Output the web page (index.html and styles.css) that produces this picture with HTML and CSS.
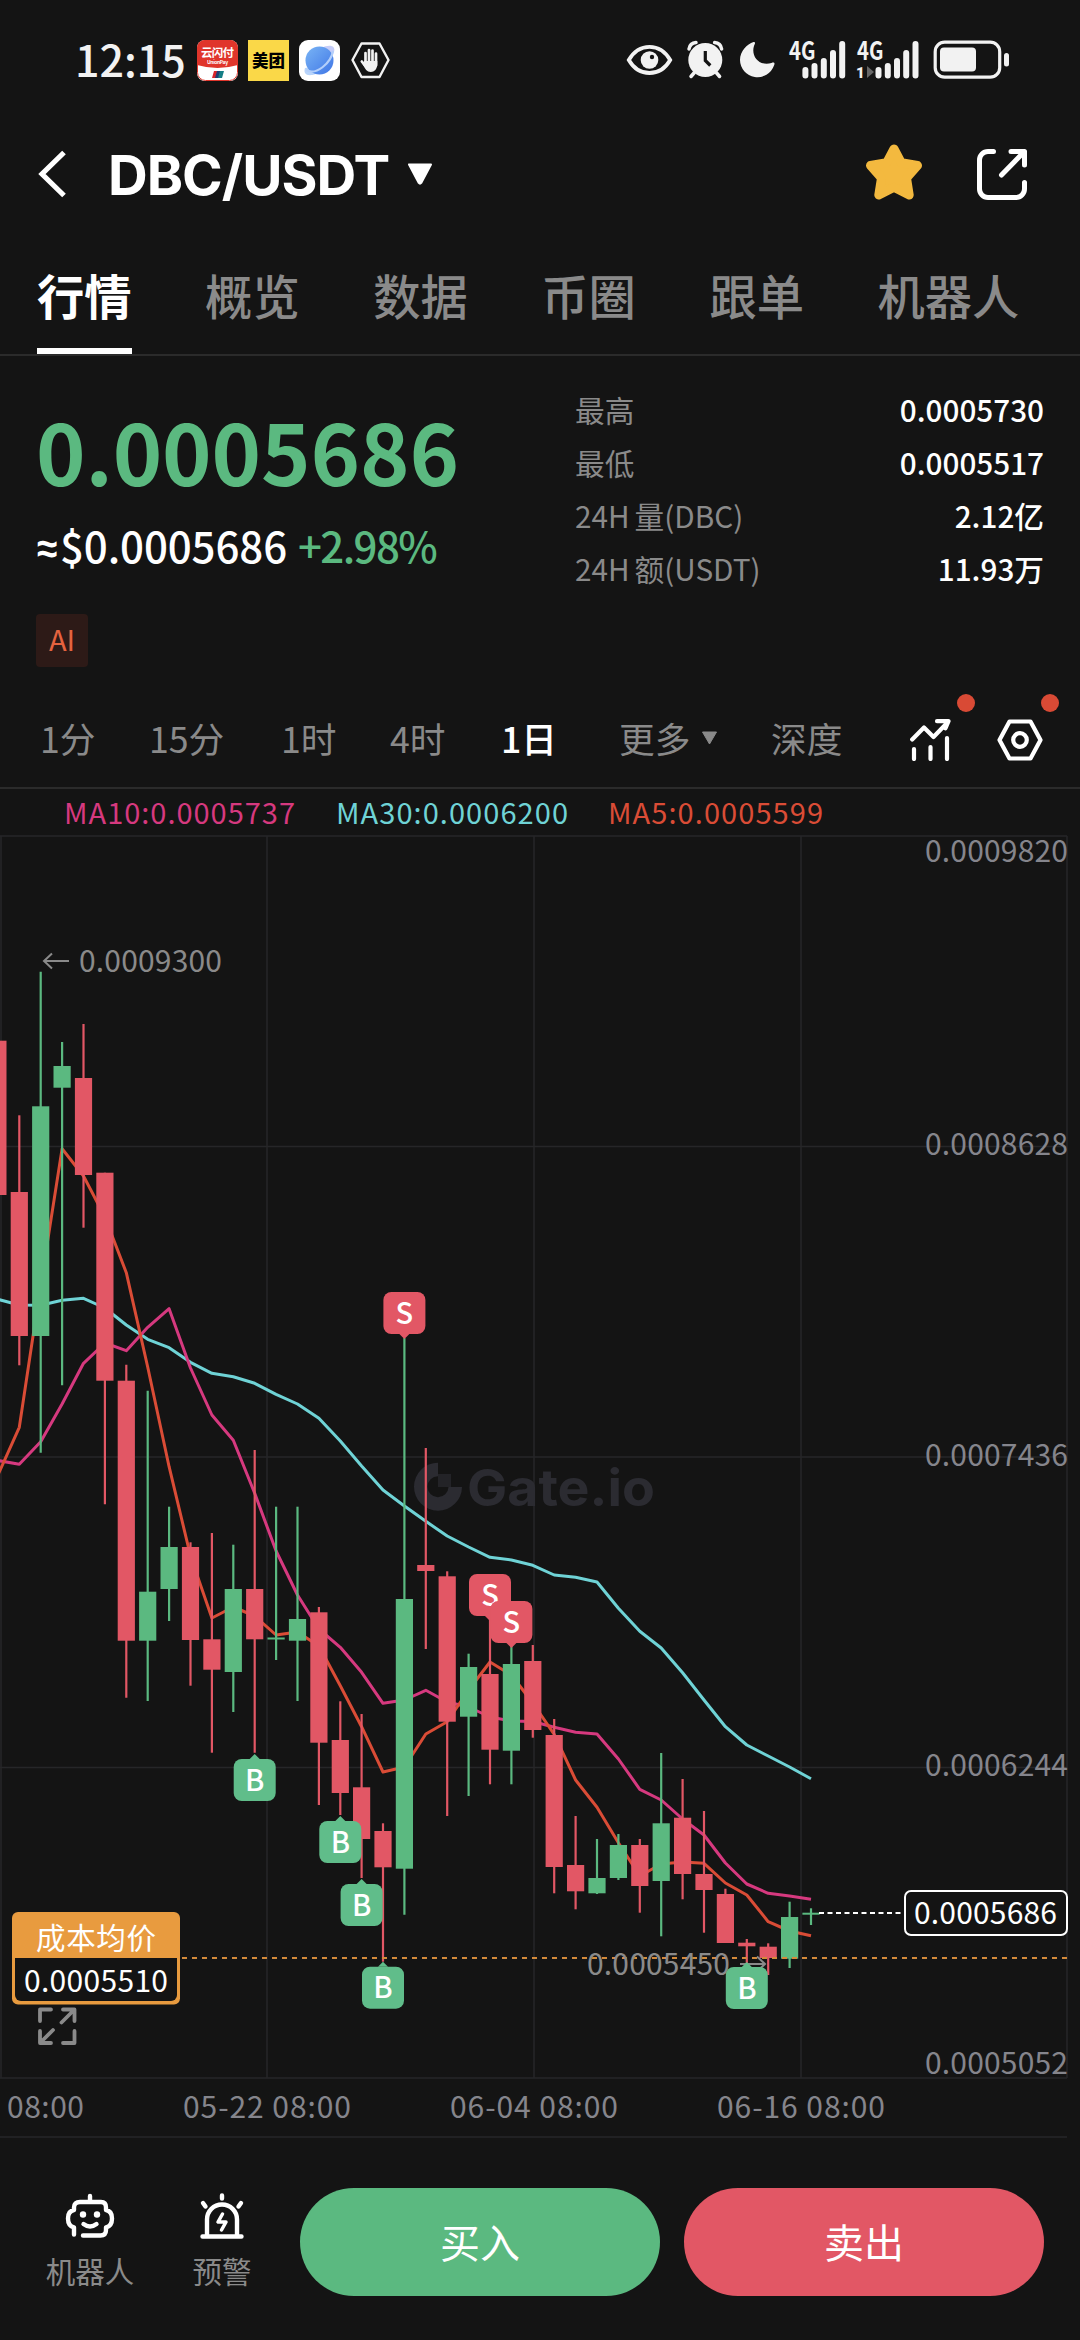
FILE: index.html
```html
<!DOCTYPE html>
<html lang="zh-CN">
<head>
<meta charset="utf-8">
<title>DBC/USDT</title>
<link rel="stylesheet" href="styles.css">
</head>
<body>
<div class="screen">
  <div class="status">
    <span class="clock">12:15</span>
    <svg class="app" width="41" height="41" viewBox="0 0 41 41">
      <defs><clipPath id="up"><rect width="41" height="41" rx="8"/></clipPath></defs>
      <g clip-path="url(#up)"><rect width="41" height="41" fill="#fff"/><path d="M0 0H41V25Q20.500 31 0 25Z" fill="#e0352b"/>
      <path d="M17 31h4l-2 7h-4z" fill="#d8262c"/><path d="M20 31h4l-2 7h-4z" fill="#1f3f73"/><path d="M23 31h4l-2 7h-4z" fill="#157f86"/>
      <rect x=".5" y=".5" width="40" height="40" rx="8" fill="none" stroke="#e0352b"/></g>
      <text x="20.500" y="17" class="up-name" textLength="33">云闪付</text><text x="20.500" y="24" class="up-sub" textLength="21">UnionPay</text>
    </svg>
    <svg class="app" width="41" height="41" viewBox="0 0 41 41"><rect width="41" height="41" fill="#fad848"/><text x="20.500" y="26.500" class="mt-name" textLength="33">美团</text></svg>
    <svg class="app" width="41" height="41" viewBox="0 0 41 41">
      <defs><linearGradient id="pl" x1="0" y1="0" x2="1" y2="1"><stop offset="0" stop-color="#79b4f5"/><stop offset="1" stop-color="#3f76e6"/></linearGradient></defs>
      <rect width="41" height="41" rx="9" fill="#fff"/><path d="M22 8C30 4 37 5 35 12L30 22Z" fill="#c6cdf8"/><path d="M6 28C4 34 8 37 17 34L12 27Z" fill="#b9d5fb"/>
      <circle cx="20.500" cy="20.500" r="14" fill="url(#pl)"/><path d="M7 30C17 36 32 23 34 11" fill="none" stroke="#b3cffa" stroke-width="2.200"/>
    </svg>
    <svg class="app" width="41" height="41" viewBox="0 0 41 41"><path d="M11.500 3.500h18l9 16.500-9 17h-18l-9-17z" fill="none" stroke="#f2f2f2" stroke-width="2.400" stroke-linejoin="round"/>
      <g stroke="#f2f2f2" stroke-width="2.700" stroke-linecap="round"><path d="M15.500 13v12M19 10v14M22.500 10.500v13M26 13.500v12M11.800 21.500l4 5"/></g><path d="M14.200 21h13.100v3c0 5-3 8-6.500 8-4 0-5.500-3-8.300-8z" fill="#f2f2f2"/></svg>
    <svg class="sys" width="390" height="60" viewBox="624 30 390 60">
      <path d="M628.800 60C634 51 641 46.800 649.500 46.800S665 51 670.200 60C665 69 658 73 649.500 73S634 69 628.800 60Z" fill="none" stroke="#f2f2f2" stroke-width="3.800"/><circle cx="649.500" cy="60" r="8.800" fill="#f2f2f2"/><circle cx="652" cy="57" r="2.200" fill="#141414"/>
      <g fill="#f2f2f2"><circle cx="705.300" cy="60" r="17"/></g>
      <g fill="none" stroke="#f2f2f2" stroke-width="3.500" stroke-linecap="round"><path d="M689 49Q690 43 696 42.600M721.600 49Q720.600 43 714.600 42.600M694 73l-3 3.500M716.600 73l3 3.500"/></g>
      <path d="M705.300 51v9.500l5 5" fill="none" stroke="#141414" stroke-width="3.200"/>
      <path d="M753.500 42C747 44 740 51 740 60a17.500 17.500 0 0 0 34 5.500c1.500-3-.5-3.500-2.500-2.500C759 67 749.500 55 754.800 44c.6-1.600 0-2.300-1.300-2z" fill="#f2f2f2"/>
      <text x="789" y="60" class="net" textLength="26.500" lengthAdjust="spacingAndGlyphs">4G</text><text x="857" y="60" class="net" textLength="26.500" lengthAdjust="spacingAndGlyphs">4G</text>
      <g stroke="#f2f2f2" stroke-width="6" stroke-linecap="round"><path d="M805.400 70v5.500M814.500 66v9.500M823.800 61v14.500M833 53v22.500M842.200 44v31.500M878.500 70v5.500M887.800 66v9.500M897 61v14.500M906.200 53v22.500M915.500 44v31.500"/></g>
      <text x="856" y="78" class="sim">1</text><path d="M867 66l7 6-7 6z" fill="#666"/>
      <rect x="935.200" y="42.200" width="64.500" height="35" rx="9.500" fill="none" stroke="#f2f2f2" stroke-width="3.200"/><rect x="940" y="47.500" width="36" height="24" rx="4" fill="#f2f2f2"/><rect x="1004" y="53" width="5" height="13.500" rx="2.500" fill="#f2f2f2"/>
    </svg>
  </div>

  <header class="head">
    <svg class="back" width="30" height="50" viewBox="0 0 30 50"><path d="M26 3.500L4 25l22 21.500" fill="none" stroke="#fff" stroke-width="5.200"/></svg>
    <h1 class="pair">DBC/USDT</h1>
    <svg class="caret" width="26" height="22" viewBox="0 0 26 22"><path d="M2 1.500h22l-9.800 18.500q-1.200 1.500-2.400 0z" fill="#fff" stroke="#fff" stroke-width="2" stroke-linejoin="round"/></svg>
    <svg class="star" width="58" height="56" viewBox="0 0 58 56"><path d="M29 5l7.400 13.800L52.500 21.500 41.500 34l2.700 17L29 43.200 13.800 51l2.700-17L5.500 21.500l16.100-2.700z" fill="#f3b93f" stroke="#f3b93f" stroke-width="9" stroke-linejoin="round"/></svg>
    <svg class="share" width="50" height="51" viewBox="0 0 50 51"><g fill="none" stroke="#fff" stroke-width="5" stroke-linecap="round" stroke-linejoin="round"><path d="M16.500 2.500H11a8.500 8.500 0 0 0-8.500 8.500V40a8.500 8.500 0 0 0 8.500 8.500H39a8.500 8.500 0 0 0 8.500-8.500v-6.500M34 2.500h13.500V16M46.500 3.500L24.500 26"/></g></svg>
  </header>

  <nav class="tabs">
    <span class="tab on">行情</span><span class="tab">概览</span><span class="tab">数据</span><span class="tab">币圈</span><span class="tab">跟单</span><span class="tab">机器人</span>
  </nav>

  <section class="info">
    <div class="quote">
      <div class="price">0.0005686</div>
      <div class="sub"><span class="usd"><span class="approx">≈</span>$0.0005686</span><span class="chg">+2.98%</span></div>
      <span class="tag">AI</span>
    </div>
    <div class="stats">
      <div class="stat"><span>最高</span><b>0.0005730</b></div>
      <div class="stat"><span>最低</span><b>0.0005517</b></div>
      <div class="stat"><span>24H<i></i>量(DBC)</span><b>2.12亿</b></div>
      <div class="stat"><span>24H<i></i>额(USDT)</span><b>11.93万</b></div>
    </div>
  </section>

  <div class="periods">
    <span class="p1">1分</span><span class="p2">15分</span><span class="p3">1时</span><span class="p4">4时</span><span class="p5">1日</span>
    <span class="p6">更多<svg width="17" height="14" viewBox="0 0 16 14"><path d="M1 1h14L8 13z" fill="#8a8a8a" stroke="#8a8a8a" stroke-linejoin="round"/></svg></span><span class="p7">深度</span>
    <span class="tool t1"><svg width="41" height="42" viewBox="0 0 41 42"><g fill="none" stroke="#fff" stroke-width="4.200" stroke-linecap="round" stroke-linejoin="round"><path d="M2.200 20.500L14 8.500 23.500 18 38 3M27 2.200h11.500M38.500 2.200l-3 7M4 30v10M20.500 28v12M37 19v21"/></g></svg><em></em></span>
    <span class="tool t2"><svg width="46" height="42" viewBox="0 0 46 42"><path d="M12.500 2.500h21L43.500 21l-10 18.500h-21L2.500 21z" fill="none" stroke="#fff" stroke-width="4.200" stroke-linejoin="round"/><circle cx="23" cy="21" r="6.800" fill="none" stroke="#fff" stroke-width="4.200"/></svg><em></em></span>
  </div>

  <svg class="chart" id="chart" width="1080" height="1349" viewBox="0 789 1080 1349"></svg>

  <footer class="bar">
    <div class="act a1">
      <svg width="50" height="48" viewBox="0 0 50 48"><g fill="none" stroke="#fff" stroke-width="4.400" stroke-linecap="round" stroke-linejoin="round"><path d="M25 4v6M9 42.500V35.500Q3 34 3 26.500T9 18V15.500Q9 10 15 10H36Q41 10 41 15.500V18Q47 19 47 26.500T41 35.500V38Q41 43.500 35.500 43.500H18M18.500 32Q25 37 31.500 32"/></g><circle cx="18" cy="22.500" r="3.200" fill="#fff"/><circle cx="32" cy="22.500" r="3.200" fill="#fff"/></svg>
      <span>机器人</span>
    </div>
    <div class="act a2">
      <svg width="46" height="48" viewBox="0 0 46 48"><g fill="none" stroke="#fff" stroke-width="4.400" stroke-linecap="round" stroke-linejoin="round"><path d="M3.500 44.500h39M8 44V27.500a15 15 0 0 1 30 0V44M23 3.500v3M4 11l2.500 3.500M42 11l-2.500 3.500"/><path d="M23.500 22l-4.500 8h8l-4.500 8" stroke-width="3.500"/></g></svg>
      <span>预警</span>
    </div>
    <button class="btn buy">买入</button><button class="btn sell">卖出</button>
  </footer>
</div>
<script src="chart.js"></script>
</body>
</html>
```
FILE: styles.css
```css
* { box-sizing: border-box; }
body { margin: 0; background: #141414; }
.screen {
  width: 1080px; height: 2340px; overflow: hidden;
  display: flex; flex-direction: column;
  background: #141414; color: #fff;
  font-family: "Noto Sans CJK SC", "Noto Sans", sans-serif;
}
svg { display: block; flex: none; }
.status { height: 120px; display: flex; align-items: center; padding-left: 75px; }
.clock { width: 122px; font-size: 43px; font-weight: 500; line-height: 50px; letter-spacing: 0; color: #f2f2f2; padding-bottom: 4px; white-space: nowrap; }
.app { margin-right: 10px; }
.sys { margin-left: 223px; }
.up-name { font-size: 11.500px; font-weight: 700; fill: #fff; text-anchor: middle; }
.up-sub { font-size: 5px; font-weight: 700; fill: #fff; text-anchor: middle; }
.mt-name { font-size: 16.500px; font-weight: 900; fill: #000; text-anchor: middle; }
.net { font-size: 25px; font-weight: 700; fill: #f2f2f2; }
.sim { font-family: Roboto, sans-serif; font-size: 15px; font-weight: 900; fill: #f2f2f2; }

.head { height: 108px; display: flex; align-items: center; padding: 0 53px 0 38px; }
.pair { margin: 0 0 0 40px; width: 299px; font-family: Inter, "Noto Sans", sans-serif; font-size: 55px; font-weight: 700; line-height: 60px; letter-spacing: -1px; white-space: nowrap; padding-top: 2px; }
.star { margin-left: 432px; margin-top: -4px; }
.share { margin-left: auto; }

.tabs { height: 128px; display: flex; gap: 73.500px; padding-left: 37px; border-bottom: 2px solid #2b2b2b; }
.tab { position: relative; font-size: 47.300px; line-height: 134px; font-weight: 500; color: #8a8a8a; white-space: nowrap; }
.tab.on { color: #fff; font-weight: 700; }
.tab.on::after { content: ""; position: absolute; left: 0; right: 0; top: 120px; height: 6px; background: #fff; }

.info { height: 334px; display: flex; justify-content: space-between; padding: 28px 36px 0 36px; }
.price { margin-top: 10px; height: 112px; font-size: 84px; line-height: 112px; font-weight: 700; letter-spacing: -.1px; color: #5bb980; }
.sub { display: flex; gap: 11px; margin-top: 9px; height: 60px; font-size: 42px; line-height: 60px; font-weight: 500; white-space: nowrap; }
.usd { letter-spacing: -.1px; }
.approx { display: inline-block; width: 24px; font-family: "Noto Sans", sans-serif; font-weight: 600; letter-spacing: 0; transform: translateX(1px) scaleX(.88); transform-origin: left; }
.chg { color: #5bb980; letter-spacing: -1.600px; }
.tag { display: block; margin-top: 39px; width: 52px; height: 53px; border-radius: 4px; background: #2d1a17; color: #e5633f; font-size: 29px; line-height: 48px; text-align: center; }
.stats { width: 469px; padding-top: 1px; }
.stat { display: flex; justify-content: space-between; height: 53px; line-height: 50px; font-size: 29.700px; white-space: nowrap; }
.stat span { color: #8a8a8a; }
.stat i { display: inline-block; width: 5px; }
.stat b { font-weight: 500; }

.periods { height: 99px; display: flex; align-items: center; border-bottom: 2px solid #2b2b2b; padding-left: 40px; font-size: 35.700px; line-height: 90px; color: #8a8a8a; white-space: nowrap; }
.periods > span { flex: none; margin-top: -2px; }
.p1 { width: 109px; } .p2 { width: 132px; } .p3 { width: 109px; } .p4 { width: 111px; }
.p5 { width: 118px; color: #fff; font-weight: 500; }
.p6 { width: 152px; display: flex; align-items: center; gap: 11px; }
.p7 { width: 139px; }
.periods > .tool { position: relative; margin-top: 2px; }
.t1 { width: 87px; }
.tool em { position: absolute; left: 47px; top: -25px; width: 18px; height: 18px; border-radius: 50%; background: #d94a35; }
.tool.t2 em { left: 44px; }

.chart { font-family: "Noto Sans CJK SC", "Noto Sans", sans-serif; }
.grid { stroke: #262628; stroke-width: 1.500; fill: none; }
.axis { fill: #85858c; font-size: 30px; }
.ma { font-size: 29px; }
.hint { fill: #8a8a8a; font-size: 30px; }
.mark { fill: #fff; font-size: 29px; font-weight: 500; text-anchor: middle; }
.now { fill: #fff; font-size: 30px; }
.cost { fill: #fff; font-size: 29.500px; }
.logo { fill: #2b2b31; font-family: Inter, sans-serif; font-size: 51px; font-weight: 700; }

.bar { flex: 1; display: flex; padding: 50px 36px 0 46px; }
.act { display: flex; flex-direction: column; align-items: center; font-size: 29.500px; line-height: 40px; color: #8a8a8a; white-space: nowrap; }
.act svg { margin: 4px 0 10px; }
.a1 { width: 88px; margin-right: 59px; }
.a2 { width: 58px; margin-right: 49px; }
.btn { flex: 1; height: 108px; border: 0; border-radius: 54px; padding: 0 0 3px; color: #fff; font: 400 40px "Noto Sans CJK SC", sans-serif; }
.buy { background: #5bb980; margin-right: 24px; }
.sell { background: #e25765; }
```
FILE: chart.js
```js
const UP = '#5bb980', DOWN = '#e25765';
const cx = k => +(21.397 * k - 2.1).toFixed(1);

// [direction, high, bodyTop, bodyBottom, low] in chart units
const candles = [
  ['d',1040.7,1040.7,1195,1195],['d',1115.3,1192,1336,1365.3],['u',971.7,1106.3,1336,1452.7],
  ['u',1042,1066,1087.7,1385.3],['d',1024,1078,1175,1227.7],['d',1172.7,1172.7,1380.7,1504.3],
  ['d',1364.7,1380.7,1640.7,1697.7],['u',1390.7,1591.7,1640.7,1701],['u',1506.7,1547,1589,1621],
  ['d',1542.3,1547,1640,1685.7],['d',1533,1639.3,1669.7,1752.7],['u',1544.7,1589,1672,1712],
  ['d',1450,1589,1639.3,1752.7],['u',1506.7,1637.5,1639.5,1660],['u',1506.7,1619,1640.7,1701],
  ['d',1607,1612.3,1742.7,1805],['d',1701.3,1740,1793,1815],['d',1714,1787.3,1839,1878],
  ['d',1823.3,1831,1867.3,1961.7],['u',1338,1599,1868.7,1914.7],['d',1448,1565,1571,1649],
  ['d',1571.3,1576.3,1721.7,1816],['u',1653.7,1667,1716.7,1796],['d',1617,1674,1749.7,1784.3],
  ['u',1643,1664,1750.7,1784.3],['d',1645,1661,1730,1737.7],['d',1719,1735,1867,1893.3],
  ['d',1816,1865,1891.3,1909.3],['u',1839,1878,1893.3,1894],['u',1834,1845,1878,1880],
  ['d',1839,1845,1886,1912.7],['u',1753,1823.3,1881,1936.3],['d',1779,1817.7,1874,1899.3],
  ['d',1811,1874,1890,1932.7],['d',1888.7,1894,1943,1943],['d',1939,1942.7,1946.3,1968],
  ['d',1943.3,1946.7,1958,1975],['u',1901.7,1917,1958.7,1968],['u',1908.3,1912.7,1914.7,1925]
];

const ma5 = [1475,1427.3,1285,1148.7,1176,1217,1272.7,1367,1466.7,1556,1618,1607,1616,1635,1632,1646,1685.7,1726.7,1772,1767,1734,1721.7,1690,1662,1675,1703,1734.3,1780,1807.3,1842.7,1876,1864,1862,1863.3,1883,1895,1921.7,1931,1935.7];
const ma10 = [1460.5,1464.3,1441.7,1404,1363.3,1343,1350.7,1327.3,1308.7,1368,1415,1440.3,1493.3,1551,1595,1629,1647.3,1672.3,1703.3,1700,1690.3,1702,1707,1717,1721,1721.5,1727.3,1732.3,1734,1759,1789.3,1800,1819,1835,1863,1884,1893.3,1896,1899.3];
const ma30 = [1299.3,1305,1305.3,1300.3,1298.3,1308,1325,1339.3,1347.7,1362.3,1373.3,1376.7,1383.3,1394.3,1404,1418.3,1441,1466,1490,1506,1521.3,1536,1547,1557.3,1560,1565.3,1575,1577.3,1582,1608.3,1631.3,1648,1672.7,1700,1726.7,1745,1756,1767,1778.7];

const line = (v, c) => `<polyline points="${v.map((y, k) => cx(k) + ',' + y).join(' ')}" fill="none" stroke="${c}" stroke-width="3" stroke-linejoin="round"/>`;
const text = (cls, x, y, w, s, extra = '') => `<text class="${cls}" x="${x}" y="${y}" textLength="${w}" ${extra}>${s}</text>`;
const arrow = d => `<path d="${d}" fill="none" stroke="#8a8a8a" stroke-width="2"/>`;

let out = '<path class="grid" d="' +
  [1, 267, 534, 801, 1067].map(x => `M${x} 836V2078`).join('') +
  [836, 1146.5, 1457, 1767.5, 2078, 2137].map(y => `M0 ${y}H1067`).join('') + '"/>';

// watermark
out += '<path d="M438 1462.700A24 24 0 1 0 462 1487H448.500A10.500 10.500 0 1 1 438 1476.200Z" fill="#2b2b31"/><path d="M438 1474h13v13h-13z" fill="#232327"/>';
out += text('logo', 467, 1506, 188, 'Gate.io', 'lengthAdjust="spacingAndGlyphs"');

out += line(ma30, '#6fd3d6') + line(ma10, '#d6397f') + line(ma5, '#da4c36');
candles.forEach(([d, h, t, b, l], k) => {
  const c = d === 'u' ? UP : DOWN, x = cx(k);
  out += `<path d="M${x} ${h}V${l}" stroke="${c}" stroke-width="2.200"/><rect x="${x - 8.6}" y="${t}" width="17.200" height="${b - t}" fill="${c}"/>`;
});

out += '<path d="M182 1958H1067" stroke="#d48a3a" stroke-width="2" stroke-dasharray="5 5"/>';
out += '<path d="M819 1913H904" stroke="#fff" stroke-width="2" stroke-dasharray="5 3.500"/>';
out += arrow('M69 961H44M52 953.500L44 961L52 968.500') + text('hint', 79, 972, 143, '0.0009300');
out += text('hint', 587, 1975, 143, '0.0005450') + arrow('M740 1964H765M757 1956.500L765 1964L757 1971.500');

[[12,1759,'B'],[16,1821,'B'],[17,1884,'B'],[18,1966.7,'B'],[35,1967,'B'],[19,1292,'S'],[23,1574,'S'],[24,1601,'S']].forEach(([k, y, s]) => {
  const x = cx(k), c = s === 'B' ? '#60bd8a' : '#e25765';
  const tip = s === 'B' ? `M${x - 5} ${y}l5 -5l5 5z` : `M${x - 5} ${y + 42}l5 5l5 -5z`;
  out += `<rect x="${x - 21}" y="${y}" width="42" height="42" rx="8" fill="${c}"/><path d="${tip}" fill="${c}"/><text class="mark" x="${x}" y="${y + 31.5}">${s}</text>`;
});

out += text('ma', 64, 824, 231, 'MA10:0.0005737', 'fill="#d6397f"') + text('ma', 336, 824, 232, 'MA30:0.0006200', 'fill="#6fd3d6"') + text('ma', 608, 824, 215, 'MA5:0.0005599', 'fill="#da4c36"');
[['0.0009820',862],['0.0008628',1155],['0.0007436',1466],['0.0006244',1776],['0.0005052',2074]].forEach(([s, y]) => out += text('axis', 925, y, 143, s));
out += text('axis', 7, 2118, 77, '08:00');
[[183,'05-22 08:00'],[450,'06-04 08:00'],[717,'06-16 08:00']].forEach(([x, s]) => out += text('axis', x, 2118, 168, s));

out += '<rect x="905" y="1891" width="162" height="44" rx="6" fill="#141414" stroke="#fff" stroke-width="2"/>' + text('now', 914, 1924, 143, '0.0005686');
out += '<rect x="12" y="1912" width="168" height="92.500" rx="6" fill="#e89b3f"/><path d="M15 1958H177V1995a6 6 0 0 1-6 6H21a6 6 0 0 1-6-6Z" fill="#141414"/>';
out += text('cost', 36, 1949, 120, '成本均价') + text('now', 24, 1992, 144, '0.0005510');
out += '<path d="M51 2009.500H40V2021M63 2009.500H74.500V2021M73.500 2010.500L61.500 2022.500M40 2031V2043H51M41 2042L53 2030M63 2043H74.500V2031" fill="none" stroke="#8a8a8a" stroke-width="3.800" stroke-linecap="round" stroke-linejoin="round"/>';
document.getElementById('chart').innerHTML = out;
```
